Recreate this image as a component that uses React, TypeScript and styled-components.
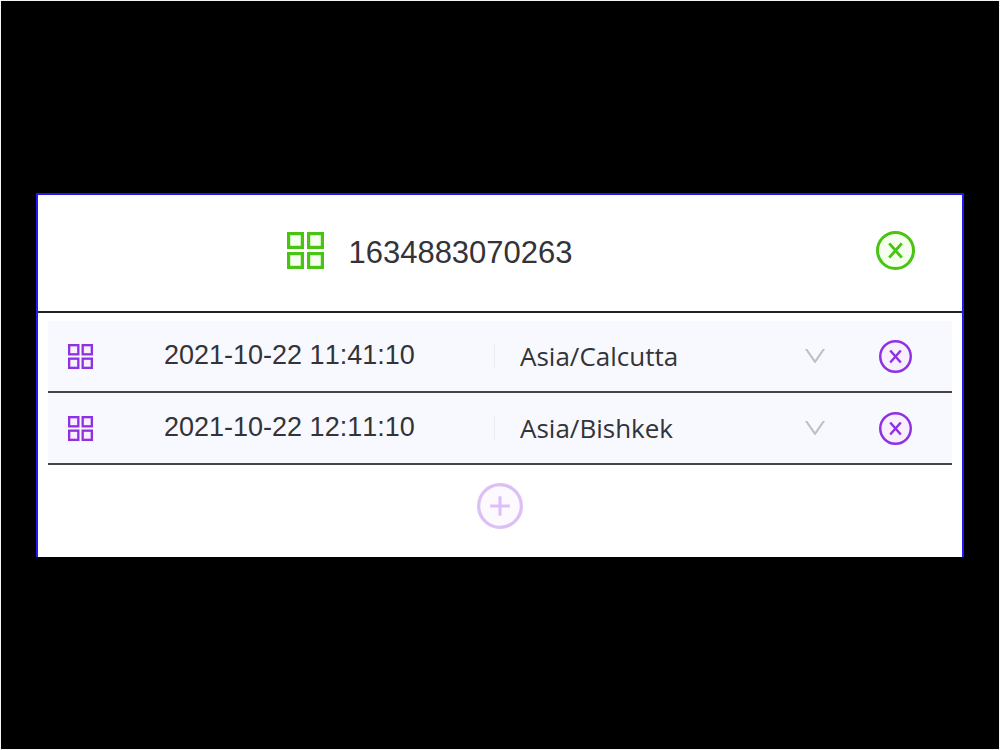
import React, { useState } from "react";
import styled, { createGlobalStyle } from "styled-components";

const GlobalStyle = createGlobalStyle`
  *, *::before, *::after { box-sizing: border-box; }
  body {
    margin: 0;
    background: #000;
    color: #333338;
    font-family: "Liberation Sans", Arial, sans-serif;
  }
`;

const GREEN = { main: "#48c413", soft: "#f6ffed" };
const PURPLE = { main: "#8f30e4", soft: "#f9f0ff" };

const Page = styled.main`
  min-height: 100vh;
  display: flex;
  align-items: center;
  padding: 0 35px;
  border: 1px solid #f4f4f4;
`;

const Panel = styled.section`
  flex: 1;
  min-width: 0;
  background: #fff;
  border: 2px solid #2418f0;
  border-bottom: none;
`;

const Header = styled.header`
  display: flex;
  align-items: center;
  height: 118px;
  padding: 0 47px 6px 0;
  border-bottom: 2px solid #222;
`;

const Heading = styled.div`
  flex: 1;
  display: flex;
  align-items: center;
  justify-content: center;
  gap: 24px;
  padding-right: 54px;
`;

const Title = styled.h1`
  margin: 0;
  padding-top: 6px;
  font-size: 31px;
  font-weight: 400;
  line-height: 36px;
`;

const List = styled.ul`
  list-style: none;
  margin: 0;
  padding: 8px 10px 0;
`;

const Row = styled.li`
  display: grid;
  grid-template-columns: 96px minmax(0, 330fr) minmax(0, 385fr) 33px;
  align-items: center;
  height: 72px;
  padding: 0 40px 0 20px;
  background: #f8f9ff;
  border-bottom: 2px solid #444448;
`;

const DateField = styled.input`
  width: 100%;
  height: 32px;
  margin-bottom: 2px;
  padding: 0;
  border: none;
  outline: none;
  background: transparent;
  color: inherit;
  font-family: inherit;
  font-size: 27px;
  font-kerning: none;
`;

const ZoneField = styled.div`
  display: flex;
  align-items: center;
  padding-right: 54px;

  &::before {
    content: "";
    width: 1px;
    height: 24px;
    margin-right: 25px;
    background: #ebebf0;
  }
`;

const ZoneSelect = styled.select`
  flex: 1;
  min-width: 0;
  height: 38px;
  padding: 0;
  border: none;
  outline: none;
  appearance: none;
  background: transparent;
  color: inherit;
  font-family: "Open Sans", "Noto Sans", sans-serif;
  font-size: 26px;
`;

const IconButton = styled.button`
  display: flex;
  padding: 0;
  border: none;
  background: none;
  cursor: pointer;
`;

const Footer = styled.footer`
  display: flex;
  justify-content: center;
  height: 92px;
  padding-top: 18px;
`;

const AddButton = styled(IconButton)`
  align-self: flex-start;
  opacity: 0.3;
`;

type Tone = { main: string; soft: string };
type IconProps = { size: number; tone: Tone };

const GridIcon = ({ size, tone, weight }: IconProps & { weight: number }) => {
  const side = 338 - weight;
  const a = 144 + weight / 2;
  const b = 542 + weight / 2;
  return (
    <svg width={size} height={size} viewBox="144 144 736 736" aria-hidden="true">
      <g fill={tone.soft} stroke={tone.main} strokeWidth={weight}>
        <rect x={a} y={a} width={side} height={side} />
        <rect x={b} y={a} width={side} height={side} />
        <rect x={a} y={b} width={side} height={side} />
        <rect x={b} y={b} width={side} height={side} />
      </g>
    </svg>
  );
};

const CloseIcon = ({ size, tone }: IconProps) => (
  <svg width={size} height={size} viewBox="64 64 896 896" aria-hidden="true">
    <circle cx="512" cy="512" r="414" fill={tone.soft} stroke={tone.main} strokeWidth="68" />
    <path d="M368 348L656 676M656 348L368 676" stroke={tone.main} strokeWidth="66" />
  </svg>
);

const PlusIcon = ({ size, tone }: IconProps) => (
  <svg width={size} height={size} viewBox="64 64 896 896" aria-hidden="true">
    <circle cx="512" cy="512" r="416" fill={tone.soft} stroke={tone.main} strokeWidth="64" />
    <path d="M320 512H704M512 320V704" stroke={tone.main} strokeWidth="60" />
  </svg>
);

const ChevronIcon = () => (
  <svg width="20" height="14" viewBox="132 256 760 512" preserveAspectRatio="none" aria-hidden="true">
    <path
      fill="#bfbfc4"
      d="M884 256h-75c-5.1 0-9.9 2.5-12.9 6.6L512 654.2 227.9 262.6c-3-4.1-7.8-6.6-12.9-6.6h-75c-6.5 0-10.3 7.4-6.5 12.7l352.6 486.1c12.8 17.6 39 17.6 51.7 0l352.6-486.1c3.9-5.3.1-12.7-6.4-12.7z"
    />
  </svg>
);

const zones = ["Asia/Calcutta", "Asia/Bishkek"];

type Entry = { id: number; date: string; zone: string };

const initialEntries: Entry[] = [
  { id: 1, date: "2021-10-22 11:41:10", zone: "Asia/Calcutta" },
  { id: 2, date: "2021-10-22 12:11:10", zone: "Asia/Bishkek" },
];

export default function App() {
  const [entries, setEntries] = useState(initialEntries);

  const update = (id: number, change: Partial<Entry>) =>
    setEntries((list) => list.map((e) => (e.id === id ? { ...e, ...change } : e)));
  const remove = (id: number) => setEntries((list) => list.filter((e) => e.id !== id));
  const add = () =>
    setEntries((list) => [...list, { ...initialEntries[0], id: Date.now() }]);

  return (
    <>
      <GlobalStyle />
      <Page>
        <Panel>
          <Header>
            <Heading>
              <GridIcon size={37} tone={GREEN} weight={64} />
              <Title>1634883070263</Title>
            </Heading>
            <IconButton type="button" aria-label="Close">
              <CloseIcon size={39} tone={GREEN} />
            </IconButton>
          </Header>
          <List>
            {entries.map((entry) => (
              <Row key={entry.id}>
                <GridIcon size={25} tone={PURPLE} weight={68} />
                <DateField
                  type="text"
                  aria-label="Date and time"
                  value={entry.date}
                  onChange={(e) => update(entry.id, { date: e.target.value })}
                />
                <ZoneField>
                  <ZoneSelect
                    aria-label="Time zone"
                    value={entry.zone}
                    onChange={(e) => update(entry.id, { zone: e.target.value })}
                  >
                    {zones.map((zone) => (
                      <option key={zone}>{zone}</option>
                    ))}
                  </ZoneSelect>
                  <ChevronIcon />
                </ZoneField>
                <IconButton type="button" aria-label="Remove" onClick={() => remove(entry.id)}>
                  <CloseIcon size={33} tone={PURPLE} />
                </IconButton>
              </Row>
            ))}
          </List>
          <Footer>
            <AddButton type="button" aria-label="Add" onClick={add}>
              <PlusIcon size={46} tone={PURPLE} />
            </AddButton>
          </Footer>
        </Panel>
      </Page>
    </>
  );
}
